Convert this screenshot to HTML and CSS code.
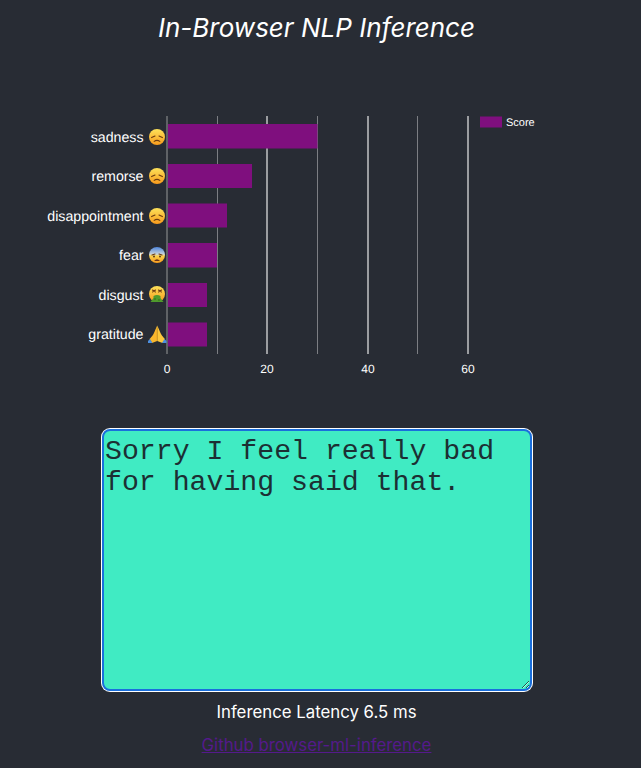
FILE: index.html
```html
<!DOCTYPE html>
<html lang="en">
  <head>
    <meta charset="UTF-8" />
    <meta name="viewport" content="width=device-width, initial-scale=1" />
    <title>In-Browser NLP Inference</title>
    <link rel="stylesheet" href="styles.css">
  </head>
  <body>
    <h1 class="title">In-Browser NLP Inference</h1>

    <svg class="chart" width="633" height="290" viewBox="0 100 633 290">
      <defs>
        <linearGradient id="faceFill" x1="0" y1="0" x2="0" y2="1">
          <stop offset="0" stop-color="#fde25a" />
          <stop offset="1" stop-color="#f79a1c" />
        </linearGradient>
        <linearGradient id="fearFill" x1="0" y1="0" x2="0" y2="1">
          <stop offset="0" stop-color="#4f86dc" />
          <stop offset="0.45" stop-color="#c9d4dc" />
          <stop offset="0.55" stop-color="#fbd34e" />
          <stop offset="1" stop-color="#f79a1c" />
        </linearGradient>
        <g id="sadFace">
          <circle cx="8" cy="8" r="8" fill="url(#faceFill)" />
          <path d="M2.600 8.600 L6 7 M13.400 8.600 L10 7" class="face-line" />
          <path d="M5.200 12.400 Q8 10.400 10.800 12.400" class="face-line" />
        </g>
      </defs>

      <!-- grid -->
      <line class="grid grid-zero" x1="167" x2="167" y1="116" y2="354" />
      <line class="grid" x1="217.5" x2="217.5" y1="116" y2="354" />
      <line class="grid grid-wide" x1="267" x2="267" y1="116" y2="354" />
      <line class="grid" x1="317.5" x2="317.5" y1="116" y2="354" />
      <line class="grid grid-wide" x1="368" x2="368" y1="116" y2="354" />
      <line class="grid" x1="417.5" x2="417.5" y1="116" y2="354" />
      <line class="grid grid-wide" x1="468" x2="468" y1="116" y2="354" />

      <!-- bars -->
      <rect class="bar" x="168" y="124" width="149.5" height="24.5" />
      <rect class="bar" x="168" y="164" width="84" height="24" />
      <rect class="bar" x="168" y="203.500" width="59" height="24" />
      <rect class="bar" x="168" y="243" width="49" height="24.5" />
      <rect class="bar" x="168" y="283" width="39" height="24" />
      <rect class="bar" x="168" y="322.500" width="39" height="24" />

      <!-- labels -->
      <text class="label" x="143.500" y="142">sadness</text>
      <text class="label" x="143.500" y="181">remorse</text>
      <text class="label" x="143.500" y="221">disappointment</text>
      <text class="label" x="143.500" y="260">fear</text>
      <text class="label" x="143.500" y="300">disgust</text>
      <text class="label" x="143.500" y="339">gratitude</text>

      <!-- emoji -->
      <use href="#sadFace" x="149" y="129" />
      <use href="#sadFace" x="149" y="168" />
      <use href="#sadFace" x="149" y="208" />
      <g transform="translate(149 247)">
        <circle cx="8" cy="8" r="8" fill="url(#fearFill)" />
        <path d="M3 8 L6 7 M13 8 L10 7" class="face-line" />
        <circle cx="5" cy="9.500" r="1" fill="#5a3a1c" />
        <circle cx="11" cy="9.500" r="1" fill="#5a3a1c" />
        <path d="M5 14 Q8 10.500 11 14 Z" fill="#6b3418" />
      </g>
      <g transform="translate(149 286)">
        <circle cx="8" cy="8" r="8" fill="url(#faceFill)" />
        <path d="M3.500 4 L6.500 6 M6.500 4 L3.500 6 M12.500 4 L9.500 6 M9.500 4 L12.500 6" class="face-line" />
        <path d="M4.500 10 Q8 8 11.500 10 L11.500 12 L14.500 16 L1.500 16 L4.500 12 Z" fill="#4f9a2c" />
        <circle cx="6" cy="13" r="0.8" fill="#2f6a1a" />
        <circle cx="10" cy="14" r="0.8" fill="#2f6a1a" />
      </g>
      <g transform="translate(148 325)">
        <path d="M9.200 0.500 C8 3 7 6 5.500 9 C4 11.500 2.500 13 1.500 14 L4 18 L9.200 16 Z" fill="#f9b62c" />
        <path d="M9.200 0.500 C10.500 3 11.500 6 13 9 C14.500 11.500 16 13 17 14 L14.500 18 L9.200 16 Z" fill="#fcc73c" />
        <path d="M0 16 L2 14 L4.500 18 L0 18 Z M18.500 16 L16.500 14 L14 18 L18.500 18 Z" fill="#4d8fe0" />
        <line x1="9.200" x2="9.200" y1="3" y2="16" stroke="#c98a18" stroke-width="0.6" />
      </g>

      <!-- ticks -->
      <text class="tick" x="167" y="373">0</text>
      <text class="tick" x="267" y="373">20</text>
      <text class="tick" x="368" y="373">40</text>
      <text class="tick" x="468" y="373">60</text>

      <!-- legend -->
      <rect class="bar" x="480" y="116.500" width="22" height="11" />
      <text class="legend" x="506" y="126">Score</text>
    </svg>

    <main class="panel">
      <textarea class="input" spellcheck="false">Sorry I feel really bad for having said that.</textarea>
      <p class="latency">Inference Latency 6.5 ms</p>
      <a class="repo-link" href="#">Github browser-ml-inference</a>
    </main>
  </body>
</html>
```

FILE: styles.css
```css
/* Dark page, teal input */
html,
body {
  height: 100%;
}
body {
  background: #282c34;
  color: #fff;
  font-family: Inter, "Liberation Sans", sans-serif;
  margin: 0;
  overflow: hidden;
  padding-right: 8px;
}
.title {
  font-size: 26px;
  font-style: italic;
  font-weight: 400;
  line-height: 32px;
  margin: 0;
  padding-top: 12px;
  text-align: center;
}
.chart {
  display: block;
  margin-top: 56px;
}
.grid {
  stroke: #7c7e83;
  stroke-width: 1;
}
.grid-wide {
  stroke: #9b9da0;
  stroke-width: 2;
}
.grid-zero {
  stroke: #5f6266;
  stroke-width: 2;
}
.bar {
  fill: #7f0f7e;
}
.label,
.tick,
.legend {
  fill: #fff;
  font-family: "Liberation Sans", Arial, sans-serif;
  text-rendering: geometricPrecision;
}
.label {
  font-size: 14.2px;
  text-anchor: end;
}
.tick {
  font-size: 12px;
  text-anchor: middle;
}
.legend {
  font-size: 11px;
}
.face-line {
  fill: none;
  stroke: #6b3a10;
  stroke-linecap: round;
  stroke-width: 1.1;
}
/* Textarea and footer text */
.panel {
  align-items: center;
  display: flex;
  flex-direction: column;
  margin-top: 39px;
}
.input {
  background: #40ebc3;
  border: 2px solid #1a6fdc;
  border-radius: 8px;
  box-shadow: 0 0 0 1px #fff;
  box-sizing: border-box;
  color: #1c2f33;
  font-family: "Liberation Mono", "Courier New", monospace;
  font-size: 28.2px;
  height: 262px;
  line-height: 31px;
  margin: 0;
  outline: none;
  padding: 5px 2px 2px 1.5px;
  width: 430px;
}
.latency {
  font-size: 16.8px;
  line-height: 22px;
  margin: 10px 0 0;
}
.repo-link {
  color: #551a8b;
  font-size: 16.8px;
  line-height: 22px;
  margin-top: 11px;
}
```
